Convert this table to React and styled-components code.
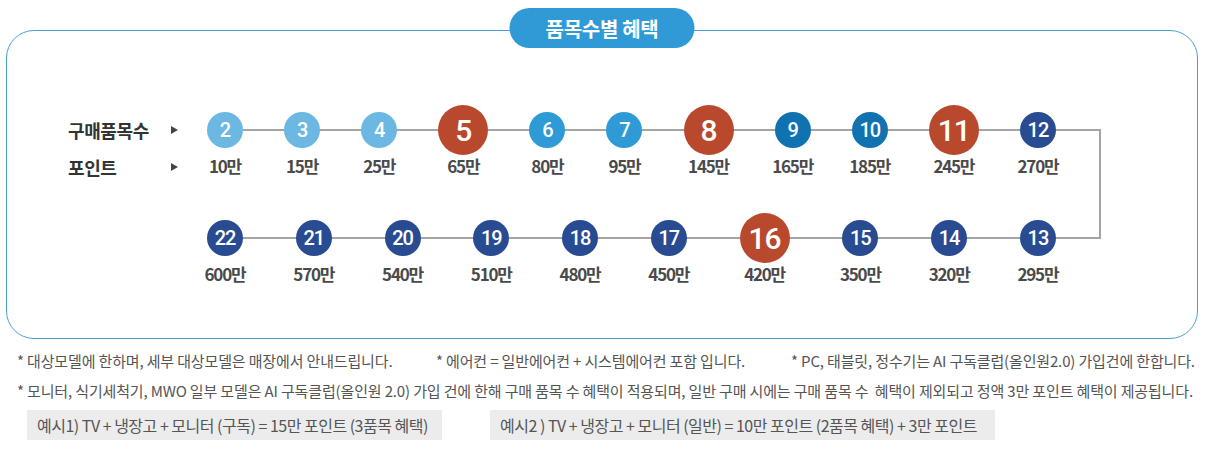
import React from 'react';
import styled, { createGlobalStyle, css } from 'styled-components';

const GlobalStyle = createGlobalStyle`
  body {
    margin: 0;
    background: #fff;
    font-family: "Noto Sans CJK KR", "Noto Sans", sans-serif;
  }
`;

const TONES = {
  sky: '#6cb8e3',
  blue: '#2e9ad6',
  deep: '#1172b1',
  navy: '#284b91',
  red: '#b8492c',
};

const topRow = [
  { n: 2, pt: '10만', tone: 'sky' },
  { n: 3, pt: '15만', tone: 'sky' },
  { n: 4, pt: '25만', tone: 'sky' },
  { n: 5, pt: '65만', tone: 'red', big: true },
  { n: 6, pt: '80만', tone: 'blue' },
  { n: 7, pt: '95만', tone: 'blue' },
  { n: 8, pt: '145만', tone: 'red', big: true },
  { n: 9, pt: '165만', tone: 'deep' },
  { n: 10, pt: '185만', tone: 'deep' },
  { n: 11, pt: '245만', tone: 'red', big: true },
  { n: 12, pt: '270만', tone: 'navy' },
];

const bottomRow = [
  { n: 22, pt: '600만', tone: 'navy' },
  { n: 21, pt: '570만', tone: 'navy' },
  { n: 20, pt: '540만', tone: 'navy' },
  { n: 19, pt: '510만', tone: 'navy' },
  { n: 18, pt: '480만', tone: 'navy' },
  { n: 17, pt: '450만', tone: 'navy' },
  { n: 16, pt: '420만', tone: 'red', big: true },
  { n: 15, pt: '350만', tone: 'navy' },
  { n: 14, pt: '320만', tone: 'navy' },
  { n: 13, pt: '295만', tone: 'navy' },
];

const Step = ({ item }) => (
  <Node $big={item.big}>
    <Slot>
      <Dot $big={item.big} $tone={item.tone}>{item.n}</Dot>
    </Slot>
    <Point>{item.pt}</Point>
  </Node>
);

const App = () => {
  return (
    <Page>
      <GlobalStyle />
      <Panel>
        <Badge>품목수별 혜택</Badge>
        <Row>
          <Legend>
            <LegendLine>
              구매품목수 <Arrow />
            </LegendLine>
            <LegendLine $second>
              포인트 <Arrow />
            </LegendLine>
          </Legend>
          <Track $turn>
            {topRow.map(item => <Step key={item.n} item={item} />)}
          </Track>
        </Row>
        <Row $lower>
          <div />
          <Track>
            {bottomRow.map(item => <Step key={item.n} item={item} />)}
          </Track>
        </Row>
      </Panel>

      <Notes>
        <NoteLine>
          <span>* 대상모델에 한하며, 세부 대상모델은 매장에서 안내드립니다.</span>
          <span>* 에어컨 = 일반에어컨 + 시스템에어컨 포함 입니다.</span>
          <span>* PC, 태블릿, 정수기는 AI 구독클럽(올인원2.0) 가입건에 한합니다.</span>
        </NoteLine>
        <NoteLine>
          * 모니터, 식기세척기, MWO 일부 모델은 AI 구독클럽(올인원 2.0) 가입 건에 한해 구매 품목 수 혜택이 적용되며, 일반 구매 시에는 구매 품목 수&nbsp; 혜택이 제외되고 정액 3만 포인트 혜택이 제공됩니다.
        </NoteLine>
        <Examples>
          <Example $w={415}>예시1) TV + 냉장고 + 모니터 (구독) = 15만 포인트 (3품목 혜택)</Example>
          <Example $w={505}>예시2 ) TV + 냉장고 + 모니터 (일반) = 10만 포인트 (2품목 혜택) + 3만 포인트</Example>
        </Examples>
      </Notes>
    </Page>
  );
};

export default App;

const Page = styled.div`
  width: 1205px;
  padding-top: 30px;
`;

const Panel = styled.div`
  position: relative;
  box-sizing: border-box;
  width: 1192px;
  height: 309px;
  margin-left: 6px;
  padding: 74px 0 0 61px;
  border: 1px solid #4a9fd2;
  border-radius: 28px;
`;

const Badge = styled.div`
  position: absolute;
  top: -23px;
  left: 50%;
  transform: translateX(-50%);
  width: 185px;
  height: 40px;
  border-radius: 20px;
  background: #2f9ad6;
  color: #fff;
  font-size: 20px;
  font-weight: 700;
  letter-spacing: -0.3px;
  display: flex;
  align-items: center;
  justify-content: center;
`;

const Row = styled.div`
  display: grid;
  grid-template-columns: 139px 849px;
  margin-top: ${p => (p.$lower ? '35px' : '0')};
`;

const Legend = styled.div`
  display: grid;
  grid-template-rows: 50px 23px;
`;

const LegendLine = styled.div`
  width: 110px;
  display: flex;
  align-items: center;
  justify-content: space-between;
  padding-top: ${p => (p.$second ? '1px' : '0')};
  font-size: 18px;
  font-weight: 700;
  color: #333;
  letter-spacing: -0.4px;
`;

const Arrow = styled.span`
  width: 0;
  height: 0;
  border-left: 7px solid #444;
  border-top: 4px solid transparent;
  border-bottom: 4px solid transparent;
`;

const line = css`
  content: '';
  position: absolute;
  background: #a4a4a4;
`;

const Track = styled.div`
  position: relative;
  display: flex;
  justify-content: space-between;

  &::before {
    ${line};
    left: 18px;
    right: -45px;
    top: 24px;
    height: 2px;
  }

  ${p =>
    p.$turn &&
    css`
      &::after {
        ${line};
        right: -45px;
        top: 24px;
        width: 2px;
        height: 110px;
      }
    `}
`;

const Node = styled.div`
  display: flex;
  flex-direction: column;
  align-items: center;
  width: ${p => (p.$big ? 50 : 36)}px;
`;

const Slot = styled.div`
  height: 50px;
  display: flex;
  align-items: center;
  justify-content: center;
`;

const Dot = styled.div`
  position: relative;
  z-index: 1;
  width: ${p => (p.$big ? 50 : 36)}px;
  height: ${p => (p.$big ? 50 : 36)}px;
  border-radius: 50%;
  background: ${p => TONES[p.$tone]};
  color: #fff;
  display: flex;
  align-items: center;
  justify-content: center;
  font-family: Roboto, "Noto Sans", sans-serif;
  font-weight: 500;
  font-size: ${p => (p.$big ? 30 : 20)}px;
  letter-spacing: -1px;
`;

const Point = styled.div`
  line-height: 22px;
  font-size: 17px;
  font-weight: 700;
  color: #4a4a4a;
  letter-spacing: -1.2px;
  white-space: nowrap;
`;

const Notes = styled.div`
  padding: 7px 0 0 17px;
  color: #555;
  font-size: 15px;
  letter-spacing: -0.15px;
`;

const NoteLine = styled.div`
  display: grid;
  grid-template-columns: 419px 355px auto;
  line-height: 30px;
  white-space: nowrap;
`;

const Examples = styled.div`
  display: flex;
  gap: 48px;
  margin: 4px 0 0 10px;
`;

const Example = styled.div`
  box-sizing: border-box;
  width: ${p => p.$w}px;
  height: 30px;
  line-height: 30px;
  padding-left: 10px;
  background: #ececec;
  font-size: 16px;
  letter-spacing: -0.5px;
  white-space: nowrap;
`;
